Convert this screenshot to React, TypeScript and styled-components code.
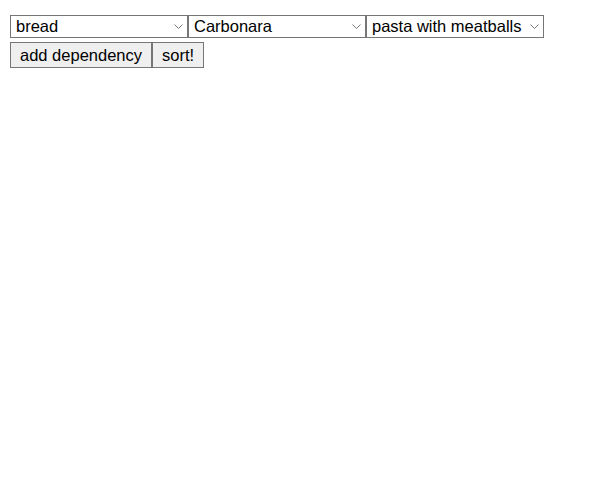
import React, { useState } from "react";
import styled, { createGlobalStyle } from "styled-components";

const Global = createGlobalStyle`
  html, body { margin: 0; padding: 0; background: #fff; }
  body { font-family: "Liberation Sans", Arial, sans-serif; }
`;

const Page = styled.div`
  display: flex;
  flex-direction: column;
  gap: 4px;
  padding: 15px 0 0 10px;
`;

const Row = styled.div`
  display: flex;
  align-items: flex-start;
`;

const SelectWrap = styled.div`
  position: relative;
  width: 178px;
  height: 23px;
`;

const Select = styled.select`
  appearance: none;
  -webkit-appearance: none;
  box-sizing: border-box;
  width: 100%;
  height: 100%;
  margin: 0;
  padding: 0 18px 0 5px;
  border: 1px solid #767676;
  border-radius: 0;
  background: #fff;
  color: #000;
  font-family: "Liberation Sans", Arial, sans-serif;
  font-size: 16.5px;
  line-height: 21px;
  outline: none;
`;

const Chevron = styled.svg`
  position: absolute;
  right: 5px;
  top: 9px;
  width: 9px;
  height: 5px;
  pointer-events: none;
`;

const Button = styled.button`
  box-sizing: border-box;
  height: 26px;
  margin: 0;
  padding: 0 9px;
  border: 1px solid #767676;
  border-radius: 0;
  background: #efefef;
  color: #000;
  font-family: "Liberation Sans", Arial, sans-serif;
  font-size: 16.5px;
  line-height: 24px;
  cursor: default;
`;

function Dropdown({ options, value }: { options: string[]; value: string }) {
  const [v, setV] = useState(value);
  return (
    <SelectWrap>
      <Select value={v} onChange={(e) => setV(e.target.value)}>
        {options.map((o) => (
          <option key={o} value={o}>
            {o}
          </option>
        ))}
      </Select>
      <Chevron viewBox="0 0 9 5">
        <path d="M0.5 0.5 L4.5 4.5 L8.5 0.5" fill="none" stroke="#777" strokeWidth="1" />
      </Chevron>
    </SelectWrap>
  );
}

const items = ["bread", "Carbonara", "pasta with meatballs", "tomato sauce", "pasta"];

export default function App() {
  return (
    <>
      <Global />
      <Page>
        <Row>
          <Dropdown options={items} value="bread" />
          <Dropdown options={items} value="Carbonara" />
          <Dropdown options={items} value="pasta with meatballs" />
        </Row>
        <Row>
          <Button>add dependency</Button>
          <Button>sort!</Button>
        </Row>
      </Page>
    </>
  );
}
